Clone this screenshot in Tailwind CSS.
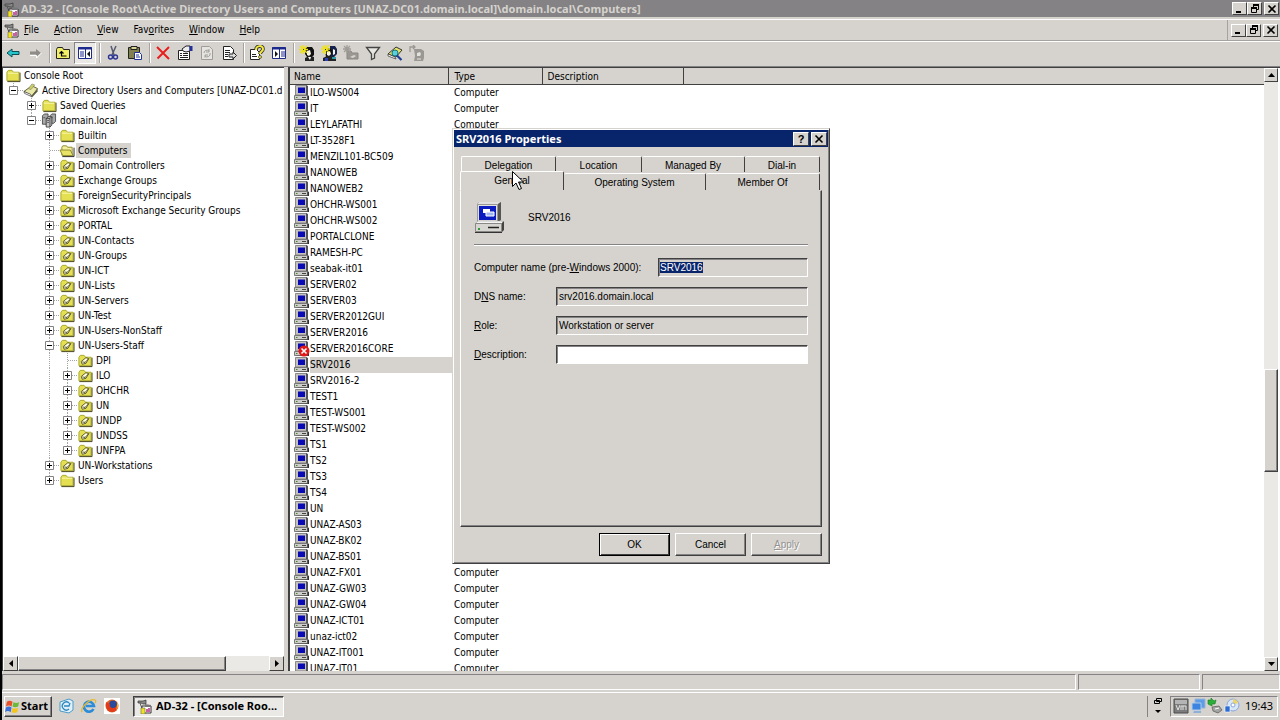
<!DOCTYPE html>
<html lang="en">
  <head>
    <meta charset="UTF-8" />
    <meta name="viewport" content="width=device-width, initial-scale=1.0" />
    <title>AD-32 - Active Directory Users and Computers</title>

    <!-- TailwindCSS -->
    <script src="https://cdn.jsdelivr.net/npm/@tailwindcss/browser@4"></script>
  </head>

  <body class="relative flex h-screen flex-col overflow-hidden border-l-2 border-black bg-[#d6d3ce] font-['DejaVu_Sans_Condensed','DejaVu_Sans',sans-serif] text-[10px] leading-4 text-black">
    <!-- Icon sprite -->
    <svg class="hidden">
      <symbol id="console" viewBox="0 0 16 16">
        <path d="M1 3h5l3-1v4H6L4 5H1z" fill="#888" stroke="#333" stroke-width=".7" />
        <path d="M3 5l3 8" stroke="#555" />
        <path d="M5 8h9v7H5z" fill="#fff" stroke="#333" />
        <path d="M8 6l6 1v2H8z" fill="#777" />
        <path d="M4 10h4v6H4z" fill="#f2e21c" stroke="#665" stroke-width=".6" />
        <path d="M10 14v-3M12 14v-4" stroke="#b0207c" stroke-width="1.4" />
      </symbol>
      <symbol id="folder" viewBox="0 0 16 16">
        <path d="M1.500 13.500V4.500L3 2.500h4l1.500 2h6v9z" fill="#e4e052" stroke="#aaa62c" />
        <path d="M2.500 5.500h11" stroke="#fbfab8" />
        <path d="M2 14.500h13.500V5" fill="none" stroke="#3f3d12" />
      </symbol>
      <symbol id="folder-open" viewBox="0 0 16 16">
        <path d="M2.500 13V4.500l1-1.500h4l1 1.500h5V13z" fill="#f2efa0" stroke="#8c8826" />
        <path d="M.500 7.500h11l3 6H3.500z" fill="#e8e468" stroke="#8c8826" />
        <path d="M3 14.500h12.500V5" fill="none" stroke="#222" />
      </symbol>
      <symbol id="ou" viewBox="0 0 16 16">
        <path d="M1.500 13.500V4.500L3 2.500h4l1.500 2h6v9z" fill="#e4e052" stroke="#aaa62c" />
        <path d="M2 14.500h13.500V5" fill="none" stroke="#3f3d12" />
        <path d="M4 9l5-4 3 1-3 5-4 1z" fill="#fffde0" stroke="#4a4820" stroke-width=".9" />
        <path d="M5 9.500l3 .5 4-4M8 10v1" fill="none" stroke="#4a4820" stroke-width=".9" />
      </symbol>
      <symbol id="book" viewBox="0 0 16 16">
        <path d="M.500 9L9 3l6 3-6 8z" fill="#e9e8a8" stroke="#55552a" />
        <path d="M.500 9l7 3 1 2.500L1 11z" fill="#fff" stroke="#444" stroke-width=".8" />
        <path d="M8 14l7-8v3L9 15.500z" fill="#5d5d44" />
        <path d="M5 6l4-5 3 1-4 5z" fill="#c9cf62" stroke="#666" stroke-width=".5" />
      </symbol>
      <symbol id="domain" viewBox="0 0 16 16">
        <path d="M1 3l2-2h4v9l-2 2H1zM9 3l2-2h4v8l-2 2H9z" fill="#a8a8a8" stroke="#333" stroke-width=".8" />
        <path d="M5 6l2-2h4v9l-2 2H5z" fill="#c8c8c8" stroke="#222" stroke-width=".8" />
        <path d="M5 6h4v9M9 6l2-2" fill="none" stroke="#222" stroke-width=".8" />
        <path d="M2 5h2M10 5h2M6 8h2M6 10h2" stroke="#555" />
      </symbol>
      <symbol id="computer" viewBox="0 0 16 16">
        <path d="M1.500 .500h11V10h-11z" fill="#c4c2be" stroke="#8a8a8a" />
        <path d="M12 0l2 1v9.500h-2" fill="#555" />
        <path d="M4 2.500h7v5.500H4z" fill="#0a0ab4" />
        <path d="M.500 10.500h13v4H.500z" fill="#cfcdc9" stroke="#777" />
        <path d="M1 15h14v-4l-1.500-1v4.500z" fill="#333" />
        <path d="M8 12.500h4" stroke="#444" />
        <path d="M2 12h1.500v1H2z" fill="#3a8a3a" />
      </symbol>
      <symbol id="computer-off" viewBox="0 0 16 16">
        <use href="#computer" />
        <circle cx="10" cy="10" r="5.500" fill="#e01818" />
        <path d="M7.500 7.500l5 5M12.500 7.500l-5 5" stroke="#fff" stroke-width="1.600" />
      </symbol>
      <symbol id="computer-lg" viewBox="0 0 32 32">
        <path d="M3 2l2-2h22l-3 2z" fill="#f8f8f8" stroke="#999" stroke-width=".5" />
        <path d="M24 2l3-2v18l-3 2z" fill="#555" />
        <path d="M3.500 2.500h20v17h-20z" fill="#e4e2de" stroke="#9a9894" />
        <path d="M5 4h17v14H5z" fill="#0a1cc0" />
        <path d="M9 7h7v4H9z" fill="#fff" />
        <path d="M12 10h8v4h-8z" fill="#9fb4f4" stroke="#fff" />
        <path d="M1 22l3-3h23l2 1-2 2z" fill="#f4f4f4" stroke="#999" stroke-width=".5" />
        <path d="M27 22l3-3v9l-3 3z" fill="#444" />
        <path d="M1.500 21.500h26v8h-26z" fill="#d8d6d2" stroke="#8a8884" />
        <path d="M1 30.500h27" stroke="#333" />
        <path d="M14 25.500h11" stroke="#222" stroke-width="1.500" />
        <path d="M4 26h2v2H4z" fill="#2f9a3a" />
      </symbol>
      <symbol id="back" viewBox="0 0 16 16"><path d="M2 8l5-4v2.500h7v3H7V12z" fill="#28c4cc" stroke="#0b4f57" /></symbol>
      <symbol id="forward" viewBox="0 0 16 16"><path d="M14 8L9 4v2.500H3v3h6V12z" fill="#8e8b88" /><path d="M3 10.500h6.500V13L14.500 8" fill="none" stroke="#fff" /></symbol>
      <symbol id="up" viewBox="0 0 16 16">
        <path d="M1.500 13.500V4.500l1-2h5l1 2h6v9z" fill="#f2ee66" stroke="#222" />
        <path d="M6.500 7v4h5M4.500 8.500l2-2 2 2" fill="none" stroke="#000" stroke-width="1.200" />
      </symbol>
      <symbol id="tree-pane" viewBox="0 0 16 16">
        <path d="M1.500 2.500h13v11h-13z" fill="#fff" stroke="#1c2a8c" />
        <path d="M1 3.500h14" stroke="#1c2a8c" stroke-width="2" />
        <path d="M8.500 4v10M3 7h4M3 9h4M3 11h4" stroke="#1c2a8c" />
        <path d="M13 6v6l-3-3z" fill="#111" />
      </symbol>
      <symbol id="action-pane" viewBox="0 0 16 16">
        <path d="M1.500 2.500h13v11h-13z" fill="#fff" stroke="#1c2a8c" />
        <path d="M1 3.500h14" stroke="#1c2a8c" stroke-width="2" />
        <path d="M8.500 4v10M10 7h4M10 9h4M10 11h4" stroke="#1c2a8c" />
        <path d="M4 6v6l3-3z" fill="#111" />
      </symbol>
      <symbol id="cut" viewBox="0 0 16 16">
        <path d="M6 1l3 9M11 1L7 10" stroke="#555a70" stroke-width="1.500" />
        <circle cx="5.500" cy="12" r="2" fill="none" stroke="#2a3596" stroke-width="1.400" />
        <circle cx="10.500" cy="12" r="2" fill="none" stroke="#2a3596" stroke-width="1.400" />
      </symbol>
      <symbol id="paste" viewBox="0 0 16 16">
        <path d="M1.500 2.500h11v11h-11z" fill="#82804c" stroke="#222" />
        <path d="M4 1.500h6v3H4z" fill="#d8d490" stroke="#222" />
        <path d="M7.500 7.500h5l2 2v5h-7z" fill="#fff" stroke="#23309a" />
        <path d="M9 10h3M9 12h4" stroke="#23309a" />
      </symbol>
      <symbol id="delete" viewBox="0 0 16 16"><path d="M2 2l12 12M14 2L2.500 13.500" stroke="#e81e1e" stroke-width="2" /></symbol>
      <symbol id="props" viewBox="0 0 16 16">
        <path d="M1.500 5.500h11v9h-11z" fill="#fff" stroke="#222" />
        <path d="M3 8.500h2M6 8.500h5M3 10.500h2M6 10.500h5M3 12.500h8" stroke="#222" />
        <path d="M5 4l4-3h4v5l-4 1-3-1z" fill="#eee" stroke="#222" />
        <path d="M12.500 1h3v5h-3z" fill="#24309a" />
      </symbol>
      <symbol id="refresh" viewBox="0 0 16 16">
        <path d="M2.500 1.500h8l3 3v10h-11z" fill="#e6e4e0" stroke="#a09d98" />
        <path d="M5 8a3 3 0 0 1 5-2M11 8a3 3 0 0 1-5 3M10 4v3H7M6 12.500V10h3" fill="none" stroke="#a09d98" />
      </symbol>
      <symbol id="export" viewBox="0 0 16 16">
        <path d="M2.500 1.500h7l3 3v10h-10z" fill="#fff" stroke="#222" />
        <path d="M4 5.500h5M4 7.500h5M4 9.500h3M4 11.500h3" stroke="#222" />
        <path d="M8 9h4V7l3.500 3.500L12 14v-2H8z" fill="#ddd" stroke="#222" />
      </symbol>
      <symbol id="help" viewBox="0 0 16 16">
        <path d="M1.500 4.500h6l3 3v7h-9z" fill="#fff" stroke="#222" />
        <path d="M3 9.500h4M3 11.500h5" stroke="#222" />
        <path d="M7 5c0-5 7-5 7-1 0 2.500-3 2.500-3 5" fill="none" stroke="#333" stroke-width="3.600" />
        <path d="M7 5c0-5 7-5 7-1 0 2.500-3 2.500-3 5" fill="none" stroke="#f4e83a" stroke-width="2" />
        <circle cx="11" cy="12" r="1.500" fill="#f4e83a" stroke="#333" stroke-width=".7" />
      </symbol>
      <symbol id="new-user" viewBox="0 0 16 16">
        <path d="M6 4l2-2h5l2 3v5l-2 2H8L6 9z" fill="#111" />
        <path d="M8 6l3-1 1 4-2 2-2-1z" fill="#f6f4e4" />
        <path d="M6 16v-3l4-2 5 1v4z" fill="#222" />
        <path d="M9 12l2 3 1-3z" fill="#fff" />
        <path d="M1 1l7 7M8 1L1 8M4.500 0v9M0 4.500h9" stroke="#eee21c" stroke-width="1.500" />
        <path d="M4 4h1v1H4z" fill="#333" />
      </symbol>
      <symbol id="new-group" viewBox="0 0 16 16">
        <path d="M9 1h5l2 3v5l-3 3H9z" fill="#16224c" />
        <path d="M12 4l2 1v4l-2 1z" fill="#f6f4e4" />
        <path d="M4 5l4-2 3 2v4l-2 3H5z" fill="#111" />
        <path d="M6 7l3-1 1 3-2 2-2-1z" fill="#f6f4e4" />
        <path d="M2 16v-3l4-2 9 1v4z" fill="#222" />
        <path d="M4 13h3v3H4z" fill="#2c3cc0" />
        <path d="M11 12h4v2h-4z" fill="#2c9aa8" />
        <path d="M1 1l7 6M8 0L1 8M4.500 0v9M0 4h9" stroke="#eee21c" stroke-width="1.500" />
        <path d="M4 4h1v1H4z" fill="#333" />
      </symbol>
      <symbol id="new-ou" viewBox="0 0 16 16">
        <path d="M4 14V6h4l1 2h6v6z" fill="#9b9894" stroke="#8a8784" />
        <path d="M1 1l6 6M7 1L1 7M4 0v8M0 4h8" stroke="#a09d98" stroke-width="1.300" />
        <path d="M7 12l4-2 2 1-3 2z" fill="#d6d3ce" />
      </symbol>
      <symbol id="filter" viewBox="0 0 16 16"><path d="M1.500 2.500h13L9.500 9v4l-3 1.500V9z" fill="#e8e6e2" stroke="#444" stroke-width="1.300" /></symbol>
      <symbol id="find" viewBox="0 0 16 16">
        <path d="M1 9l8-7 6 3-6 7z" fill="#e4e06a" stroke="#333" />
        <path d="M1 9l7 3 1 2-8-3z" fill="#fff" stroke="#333" stroke-width=".7" />
        <circle cx="8" cy="8" r="3" fill="#5ccfd8" stroke="#14777f" />
        <path d="M10 10.500l4.500 4.500" stroke="#1e3c9a" stroke-width="2.200" />
      </symbol>
      <symbol id="add-member" viewBox="0 0 16 16">
        <path d="M5 4h7l3 2v7l-1 3H5l1-5z" fill="#9b9894" />
        <path d="M8 8l3-1 1 2-1 2-3 0z" fill="#e4e2de" />
        <path d="M8 14h4" stroke="#e4e2de" />
        <path d="M1 7V2h5M4 0l2 2-2 2" fill="none" stroke="#9b9894" stroke-width="1.300" />
      </symbol>
      <symbol id="win-min" viewBox="0 0 12 10"><path d="M2 7h5v2H2z" /></symbol>
      <symbol id="win-restore" viewBox="0 0 12 10">
        <path d="M4 0h6v2H4zM2 3h6v2H2z" />
        <path d="M4.500 1v2M9.500 1v4.500H8M2.500 4v4.500h5V4" fill="none" stroke="#000" />
      </symbol>
      <symbol id="win-close" viewBox="0 0 12 10"><path d="M2.500 1.500l7 7M9.500 1.500l-7 7" stroke="#000" stroke-width="1.600" /></symbol>
      <symbol id="flag" viewBox="0 0 16 16">
        <path d="M2 3c2-1.500 4-1.500 6 0L7 8C5 6.500 3 6.500 1 8z" fill="#e8502a" />
        <path d="M9 3.500c2 1 4 1 6 0L14 8c-2 1-4 1-6 0z" fill="#6cb83a" />
        <path d="M1 9c2-1.500 4-1.500 6 0l-1 5c-2-1.500-4-1.500-6 0z" fill="#3c6fd8" />
        <path d="M8 9.500c2 1 4 1 6 0l-1 4.500c-2 1-4 1-6 0z" fill="#f4c41c" />
      </symbol>
      <symbol id="desktop" viewBox="0 0 16 16">
        <path d="M2 4l9-3 4 2v9l-4 3-9-2z" fill="#dff0fa" stroke="#4a9cc8" />
        <path d="M11 5a4 4 0 1 0 0 6M6 8h5l1-3" fill="none" stroke="#2f86bc" stroke-width="1.300" />
      </symbol>
      <symbol id="ie" viewBox="0 0 16 16">
        <path d="M12.500 11a5 5 0 1 1 .5-3H5" fill="none" stroke="#2c8cd8" stroke-width="2.600" />
        <path d="M1 14C-1 10 9 0 14 2c1 .5 1 2 0 3" fill="none" stroke="#e8b82c" stroke-width="1.300" />
      </symbol>
      <symbol id="firefox" viewBox="0 0 16 16">
        <path d="M0 0h16v16H0z" fill="#fff" />
        <circle cx="8" cy="8" r="6.500" fill="#e8641c" />
        <circle cx="9" cy="6.500" r="4" fill="#2a4a9c" />
        <path d="M2 4c1 1 3 1 4 2-1 2 1 4 3 4 2 0 3-1 4-3 1 5-2 7-5 7-4 0-7-4-6-10z" fill="#e03c1c" />
        <path d="M13 4c2 3 1 6-1 8 1-3 1-5 1-8z" fill="#f8b82c" />
      </symbol>
      <symbol id="vm" viewBox="0 0 16 16">
        <path d="M1 1h14v14H1z" fill="#7c7c7c" stroke="#4c4c4c" />
        <path d="M2 2h12v4H2z" fill="#b4b4b4" />
        <path d="M3 7l2 5 2-5M8 12V8h2v4M10 8h3v4" fill="none" stroke="#e4e4e4" />
      </symbol>
      <symbol id="network" viewBox="0 0 16 16">
        <path d="M5 1h10v9H5z" fill="#5c9ce8" stroke="#9ab4d4" />
        <path d="M2 5h9v7H2z" fill="#3c84e0" stroke="#b4cce8" />
        <path d="M4 13h7v2H3z" fill="#8cb0d8" />
      </symbol>
      <symbol id="safely-remove" viewBox="0 0 16 16">
        <path d="M5 9l7-1 3 4-4 3-5-2z" fill="#a4a4a4" stroke="#555" stroke-width=".7" />
        <path d="M8 11l4-1" stroke="#fff" />
        <path d="M1 2h3V0l3 3 2-1-1 4H5v2L1 6z" fill="#2cae3a" stroke="#167a24" stroke-width=".6" />
      </symbol>
      <symbol id="updates" viewBox="0 0 16 16">
        <circle cx="9" cy="7" r="6" fill="#d8e6f8" stroke="#88a8dc" />
        <path d="M9 1a6 6 0 0 1 5 4L9 7z" fill="#f0d468" />
        <circle cx="9" cy="7" r="2" fill="#fff" stroke="#88a8dc" />
        <path d="M1 8h5v6H1z" fill="#2c6cd4" stroke="#fff" stroke-width=".6" />
      </symbol>

      <!-- Tree connector cells -->
      <symbol id="t-line" viewBox="0 0 18 15"><path d="M8.500 0v15" stroke="#a5a5a5" stroke-dasharray="1 1" /></symbol>
      <symbol id="t-tee" viewBox="0 0 18 15"><path d="M8.500 0v15M9 7.500h9" stroke="#a5a5a5" stroke-dasharray="1 1" /></symbol>
      <symbol id="t-box" viewBox="0 0 18 15">
        <path d="M13 7.500h5" stroke="#a5a5a5" stroke-dasharray="1 1" />
        <path d="M4.500 3.500h8v8h-8z" fill="#fff" stroke="#848284" />
        <path d="M6 7.500h5" stroke="#000" />
      </symbol>
      <symbol id="t-minus" viewBox="0 0 18 15"><path d="M8.500 0v15" stroke="#a5a5a5" stroke-dasharray="1 1" /><use href="#t-box" /></symbol>
      <symbol id="t-plus" viewBox="0 0 18 15"><use href="#t-minus" /><path d="M8.500 5v5" stroke="#000" /></symbol>
      <symbol id="t-minus-last" viewBox="0 0 18 15"><path d="M8.500 0v4" stroke="#a5a5a5" stroke-dasharray="1 1" /><use href="#t-box" /></symbol>
      <symbol id="t-plus-last" viewBox="0 0 18 15"><use href="#t-minus-last" /><path d="M8.500 5v5" stroke="#000" /></symbol>
    </svg>

    <!-- Title bar -->
    <header class="flex h-[17px] shrink-0 items-center gap-px bg-[#848284] pr-px pl-0.5 text-[#d6d3ce]">
      <svg class="size-4 shrink-0"><use href="#console" /></svg>
      <h1 class="flex-1 truncate font-['Noto_Sans',sans-serif] text-[11px] leading-4 font-bold">AD-32 - [Console Root\Active Directory Users and Computers [UNAZ-DC01.domain.local]\domain.local\Computers]</h1>
      <div class="flex text-black" data-window-buttons></div>
    </header>

    <!-- Menu bar -->
    <nav class="mt-0.5 flex h-[22px] shrink-0 items-center border-y border-t-white border-b-[#a5a2a0] pr-0.5 pl-0.5">
      <svg class="mr-1 size-4"><use href="#console" /></svg>
      <div class="flex flex-1 gap-[15px]" id="menu">
        <button><u>F</u>ile</button>
        <button><u>A</u>ction</button>
        <button><u>V</u>iew</button>
        <button>Fav<u>o</u>rites</button>
        <button><u>W</u>indow</button>
        <button><u>H</u>elp</button>
      </div>
      <div class="flex items-center self-stretch border-l border-[#a5a2a0] pl-[3px]" data-window-buttons></div>
    </nav>

    <!-- Toolbar -->
    <div id="toolbar" class="mb-0.5 flex h-[23px] shrink-0 items-center border-t border-white"></div>

    <main class="flex min-h-0 flex-1 gap-1 border-t border-[#848284]">
      <!-- Console tree -->
      <section class="flex w-[282px] shrink-0 flex-col border-t border-l border-[#404040] bg-white">
        <ul id="tree" class="min-h-0 flex-1 overflow-hidden pl-0.5"></ul>
        <div class="flex h-[15px] bg-[#ebe9e6]">
          <button aria-label="Scroll left" class="flex w-[15px] items-center justify-center border border-t-white border-r-[#404040] border-b-[#404040] border-l-white bg-[#d6d3ce]"><svg class="h-[7px] w-1" viewBox="0 0 4 7"><path d="M4 0v7L0 3.500z" /></svg></button>
          <div class="w-[74%] border border-t-white border-r-[#404040] border-b-[#404040] border-l-white bg-[#d6d3ce] shadow-[inset_-1px_-1px_#848284]"></div>
          <button aria-label="Scroll right" class="ml-auto flex w-[15px] items-center justify-center border border-t-white border-r-[#404040] border-b-[#404040] border-l-white bg-[#d6d3ce]"><svg class="h-[7px] w-1" viewBox="0 0 4 7"><path d="M0 0v7l4-3.500z" /></svg></button>
        </div>
      </section>

      <!-- Result list -->
      <section class="flex min-w-0 flex-1 border-t border-l-2 border-[#404040] bg-white">
        <div class="min-w-0 flex-1 overflow-hidden">
          <table class="w-full table-fixed border-collapse text-left">
            <thead class="bg-[#d6d3ce]">
              <tr class="h-4 border-b border-[#404040] leading-[15px]">
                <th class="w-[158px] border-r border-[#404040] pt-px pl-1 font-normal">Name</th>
                <th class="w-[94px] border-r border-[#404040] pt-px pl-[6px] font-normal">Type</th>
                <th class="w-[141px] border-r border-[#404040] pt-px pl-[5px] font-normal">Description</th>
                <th aria-label="Empty"></th>
              </tr>
            </thead>
            <tbody id="list"></tbody>
          </table>
        </div>
        <div class="mr-0.5 flex w-[14px] flex-col bg-[#ebe9e6]">
          <button aria-label="Scroll up" class="flex h-[14px] items-center justify-center border border-t-white border-r-[#404040] border-b-[#404040] border-l-white bg-[#d6d3ce]"><svg class="h-1 w-[7px]" viewBox="0 0 7 4"><path d="M0 4h7L3.500 0z" /></svg></button>
          <div class="flex-[287]"></div>
          <div class="flex-[102] border border-t-white border-r-[#404040] border-b-[#404040] border-l-white bg-[#d6d3ce] shadow-[inset_-1px_-1px_#848284]"></div>
          <div class="flex-[185]"></div>
          <button aria-label="Scroll down" class="flex h-[14px] items-center justify-center border border-t-white border-r-[#404040] border-b-[#404040] border-l-white bg-[#d6d3ce]"><svg class="h-1 w-[7px]" viewBox="0 0 7 4"><path d="M0 0h7L3.500 4z" /></svg></button>
        </div>
      </section>
    </main>

    <!-- Status bar -->
    <div class="flex h-[21px] shrink-0 gap-0.5 pt-[3px] pb-0.5">
      <div class="flex-1 border border-t-[#848284] border-r-white border-b-white border-l-[#848284]"></div>
      <div class="w-[122px] border border-t-[#848284] border-r-white border-b-white border-l-[#848284]"></div>
      <div class="w-[78px] border border-t-[#848284] border-r-white border-b-white border-l-[#848284]"></div>
    </div>

    <!-- Taskbar -->
    <footer class="flex h-[28px] shrink-0 items-center border-t border-white pr-0.5 pb-px pl-[2px]">
      <button class="flex h-[21px] w-[48px] items-center gap-px border border-t-white border-r-[#404040] border-b-[#404040] border-l-white font-['Noto_Sans',sans-serif] text-[11px] font-bold shadow-[inset_-1px_-1px_#848284]"><svg class="size-[15px]"><use href="#flag" /></svg>Start</button>
      <div class="ml-[6px] flex gap-[7px]">
        <svg class="size-4"><use href="#desktop" /></svg>
        <svg class="size-4"><use href="#ie" /></svg>
        <svg class="size-4"><use href="#firefox" /></svg>
      </div>
      <button class="ml-[13px] flex h-[21px] w-[151px] items-center gap-[3px] border border-t-[#404040] border-r-white border-b-white border-l-[#404040] bg-[#ebe9e6] pl-[3px] font-['Noto_Sans',sans-serif] text-[11px] font-bold whitespace-nowrap shadow-[inset_1px_1px_#848284]"><svg class="size-4"><use href="#console" /></svg>AD-32 - [Console Roo...</button>
      <div class="ml-auto flex h-[21px] items-center border-l border-[#848284] pl-[6px]">
        <svg class="h-4 w-2" viewBox="0 0 8 16"><path d="M2.500 .500h5v3h-5zM.500 2.500h5v3h-5z" fill="#d6d3ce" stroke="#000" /><path d="M1 12h6l-3 3z" /></svg>
      </div>
      <div class="ml-2 flex h-[21px] items-center gap-px border border-t-[#848284] border-r-white border-b-white border-l-[#848284] pr-1 pl-0.5">
        <svg class="size-4"><use href="#vm" /></svg>
        <svg class="size-4"><use href="#network" /></svg>
        <svg class="size-4"><use href="#safely-remove" /></svg>
        <svg class="size-4"><use href="#updates" /></svg>
        <time class="ml-1 font-['Noto_Sans',sans-serif] text-[11px]">19:43</time>
      </div>
    </footer>

    <!-- Properties dialog -->
    <form role="dialog" aria-label="SRV2016 Properties" class="absolute top-[128px] left-[450px] w-[378px] border border-t-[#d6d3ce] border-r-[#404040] border-b-[#404040] border-l-[#d6d3ce] bg-[#d6d3ce] p-px font-['Liberation_Sans',sans-serif] shadow-[inset_1px_1px_#fff,inset_-1px_-1px_#848284]">
      <div class="flex h-[17px] items-center bg-[#08246b] pr-px pl-0.5 text-white">
        <h2 class="flex-1 font-['Noto_Sans',sans-serif] text-[11px] leading-4 font-bold">SRV2016 Properties</h2>
        <button type="button" aria-label="Help" class="flex h-[14px] w-4 items-center justify-center border border-t-white border-r-[#404040] border-b-[#404040] border-l-white bg-[#d6d3ce] text-[11px] leading-3 font-bold text-black">?</button>
        <button type="button" aria-label="Close" class="ml-0.5 flex h-[14px] w-4 items-center justify-center border border-t-white border-r-[#404040] border-b-[#404040] border-l-white bg-[#d6d3ce]"><svg class="h-[10px] w-3"><use href="#win-close" /></svg></button>
      </div>

      <div class="px-[6px] pt-[9px] pb-[6px]">
        <div role="tablist">
          <div class="flex h-4 pr-0.5 pl-px">
            <button type="button" role="tab" class="w-[95px] rounded-t-xs border-t border-r border-l border-t-white border-r-[#404040] border-l-white pt-px">Delegation</button>
            <button type="button" role="tab" class="w-[86px] rounded-t-xs border-t border-r border-t-white border-r-[#404040] pt-px">Location</button>
            <button type="button" role="tab" class="w-[103px] rounded-t-xs border-t border-r border-t-white border-r-[#404040] pt-px">Managed By</button>
            <button type="button" role="tab" class="flex-1 rounded-t-xs border-t border-r border-t-white border-r-[#404040] pt-px">Dial-in</button>
          </div>
          <div class="flex h-[18px] items-end pr-0.5">
            <button type="button" role="tab" aria-selected="true" class="h-[19px] w-[104px] rounded-t-xs border-t border-r border-l border-t-white border-r-[#404040] border-l-white bg-[#d6d3ce]">General</button>
            <button type="button" role="tab" class="h-[17px] w-[142px] rounded-t-xs border-t border-r border-t-white border-r-[#404040] pt-px">Operating System</button>
            <button type="button" role="tab" class="h-[17px] flex-1 rounded-t-xs border-t border-r border-t-white border-r-[#404040] pt-px">Member Of</button>
          </div>
        </div>

        <div role="tabpanel" class="min-h-[337px] border border-t-[#d6d3ce] border-r-[#404040] border-b-[#404040] border-l-white pt-[11px] pr-[13px] pl-[13px] shadow-[inset_-1px_-1px_#848284]">
          <div class="flex items-center gap-[22px] border-b border-[#848284] pb-[10px] shadow-[0_1px_#fff]">
            <svg class="size-8"><use href="#computer-lg" /></svg>
            <span>SRV2016</span>
          </div>
          <div class="mt-[13px] flex flex-col gap-[10px]">
            <div class="flex items-center justify-between">
              <label for="name">Computer name (pre-<u>W</u>indows 2000):</label>
              <input id="name" readonly value="SRV2016" class="h-[19px] w-[150px] border border-t-[#404040] border-r-white border-b-white border-l-[#404040] px-px shadow-[inset_1px_1px_#848284] outline-none selection:bg-[#08246b] selection:text-white" />
            </div>
            <div class="flex items-center justify-between">
              <label for="dns">D<u>N</u>S name:</label>
              <input id="dns" readonly value="srv2016.domain.local" class="h-[19px] w-[252px] border border-t-[#404040] border-r-white border-b-white border-l-[#404040] px-0.5 shadow-[inset_1px_1px_#848284] outline-none" />
            </div>
            <div class="flex items-center justify-between">
              <label for="role"><u>R</u>ole:</label>
              <input id="role" readonly value="Workstation or server" class="h-[19px] w-[252px] border border-t-[#404040] border-r-white border-b-white border-l-[#404040] px-0.5 shadow-[inset_1px_1px_#848284] outline-none" />
            </div>
            <div class="flex items-center justify-between">
              <label for="desc"><u>D</u>escription:</label>
              <input id="desc" class="h-[19px] w-[252px] border border-t-[#404040] border-r-white border-b-white border-l-[#404040] bg-white px-0.5 shadow-[inset_1px_1px_#848284] outline-none" />
            </div>
          </div>
        </div>

        <div class="mt-[6px] flex justify-end gap-[5px]">
          <button type="button" class="h-[23px] w-[71px] border border-black shadow-[inset_1px_1px_#fff,inset_-1px_-1px_#404040]">OK</button>
          <button type="button" class="h-[23px] w-[71px] border border-t-white border-r-[#404040] border-b-[#404040] border-l-white shadow-[inset_-1px_-1px_#848284]">Cancel</button>
          <button type="button" disabled class="h-[23px] w-[71px] border border-t-white border-r-[#404040] border-b-[#404040] border-l-white text-[#949290] shadow-[inset_-1px_-1px_#848284] text-shadow-[1px_1px_0_#fff]"><u>A</u>pply</button>
        </div>
      </div>
    </form>

    <!-- Mouse pointer -->
    <svg class="pointer-events-none absolute top-[171px] left-[510px] h-[19px] w-3" viewBox="0 0 12 19">
      <path d="M.500 .500v15l3.500-3.500 3 6.500 2.500-1-3-6.500h5z" fill="#fff" stroke="#000" />
    </svg>

    <script>
      // Toolbar: "|" is a separator, "*" marks the pressed button
      const tools = "back forward | up *tree-pane | cut paste | delete props refresh export | help action-pane | new-user new-group new-ou filter find add-member";

      document.getElementById("toolbar").innerHTML = tools.split(" ").map((t) => {
        if (t === "|") {
          return `<span class="mr-0.5 ml-[3px] h-5 w-px border-l border-[#a5a2a0] shadow-[1px_0_#fff]"></span>`;
        }
        const name = t.replace("*", "");
        const look = t[0] === "*"
          ? "border border-t-[#848284] border-l-[#848284] border-r-white border-b-white bg-[#ebe9e6]"
          : "";
        return `<button aria-label="${name}" class="flex h-[22px] w-[22px] items-center justify-center ${look}"><svg class="size-4"><use href="#${name}" /></svg></button>`;
      }).join("");

      // Minimize / restore / close, used by the frame and the child window
      document.querySelectorAll("[data-window-buttons]").forEach((el) => {
        el.innerHTML = ["win-min", "win-restore", "win-close"].map((b) => `
          <button aria-label="${b}" class="flex h-[13px] w-[15px] items-center justify-center border border-t-white border-r-[#404040] border-b-[#404040] border-l-white bg-[#d6d3ce] last:ml-0.5">
            <svg class="h-[10px] w-3"><use href="#${b}" /></svg>
          </button>`).join("");
      });

      // One character per indent column
      const cells = { "|": "t-line", t: "t-tee", "+": "t-plus", "-": "t-minus", "=": "t-minus-last", L: "t-plus-last" };

      const nodes = [
        ["", "folder", "Console Root"],
        ["=", "book", "Active Directory Users and Computers [UNAZ-DC01.d"],
        [".+", "folder", "Saved Queries"],
        [".=", "domain", "domain.local"],
        ["..+", "folder", "Builtin"],
        ["..t", "folder-open", "Computers"],
        ["..+", "ou", "Domain Controllers"],
        ["..+", "ou", "Exchange Groups"],
        ["..+", "folder", "ForeignSecurityPrincipals"],
        ["..+", "ou", "Microsoft Exchange Security Groups"],
        ["..+", "ou", "PORTAL"],
        ["..+", "ou", "UN-Contacts"],
        ["..+", "ou", "UN-Groups"],
        ["..+", "ou", "UN-ICT"],
        ["..+", "ou", "UN-Lists"],
        ["..+", "ou", "UN-Servers"],
        ["..+", "ou", "UN-Test"],
        ["..+", "ou", "UN-Users-NonStaff"],
        ["..-", "ou", "UN-Users-Staff"],
        ["..|t", "ou", "DPI"],
        ["..|+", "ou", "ILO"],
        ["..|+", "ou", "OHCHR"],
        ["..|+", "ou", "UN"],
        ["..|+", "ou", "UNDP"],
        ["..|+", "ou", "UNDSS"],
        ["..|L", "ou", "UNFPA"],
        ["..+", "ou", "UN-Workstations"],
        ["..L", "folder", "Users"]
      ];

      document.getElementById("tree").innerHTML = nodes.map(([guides, icon, label]) => {
        const lead = [...guides].map((g) =>
          `<svg class="h-[15px] w-[18px] shrink-0">${cells[g] ? `<use href="#${cells[g]}" />` : ""}</svg>`).join("");
        const bg = label === "Computers" ? "bg-[#d6d3ce] pr-1" : "";
        return `<li class="flex h-[15px] items-center whitespace-nowrap">${lead}<svg class="mr-px h-[15px] w-4 shrink-0"><use href="#${icon}" /></svg><span class="pl-0.5 leading-[15px] ${bg}">${label}</span></li>`;
      }).join("");

      const computers = ["ILO-WS004", "IT", "LEYLAFATHI", "LT-3528F1", "MENZIL101-BC509", "NANOWEB", "NANOWEB2",
        "OHCHR-WS001", "OHCHR-WS002", "PORTALCLONE", "RAMESH-PC", "seabak-it01", "SERVER02", "SERVER03",
        "SERVER2012GUI", "SERVER2016", "SERVER2016CORE", "SRV2016", "SRV2016-2", "TEST1", "TEST-WS001",
        "TEST-WS002", "TS1", "TS2", "TS3", "TS4", "UN", "UNAZ-AS03", "UNAZ-BK02", "UNAZ-BS01", "UNAZ-FX01",
        "UNAZ-GW03", "UNAZ-GW04", "UNAZ-ICT01", "unaz-ict02", "UNAZ-IT001", "UNAZ-IT01"];

      document.getElementById("list").innerHTML = computers.map((name) => {
        const bg = name === "SRV2016" ? "bg-[#d6d3ce]" : "";
        const icon = name === "SERVER2016CORE" ? "computer-off" : "computer";
        return `<tr class="h-4">
          <td class="p-0"><div class="flex h-4 items-center pl-1"><svg class="h-4 w-4 shrink-0"><use href="#${icon}" /></svg><span class="flex-1 ${bg}">${name}</span></div></td>
          <td class="p-0 pl-[6px] ${bg}">Computer</td>
          <td></td>
          <td></td>
        </tr>`;
      }).join("");

      document.getElementById("name").select();
    </script>
  </body>
</html>
